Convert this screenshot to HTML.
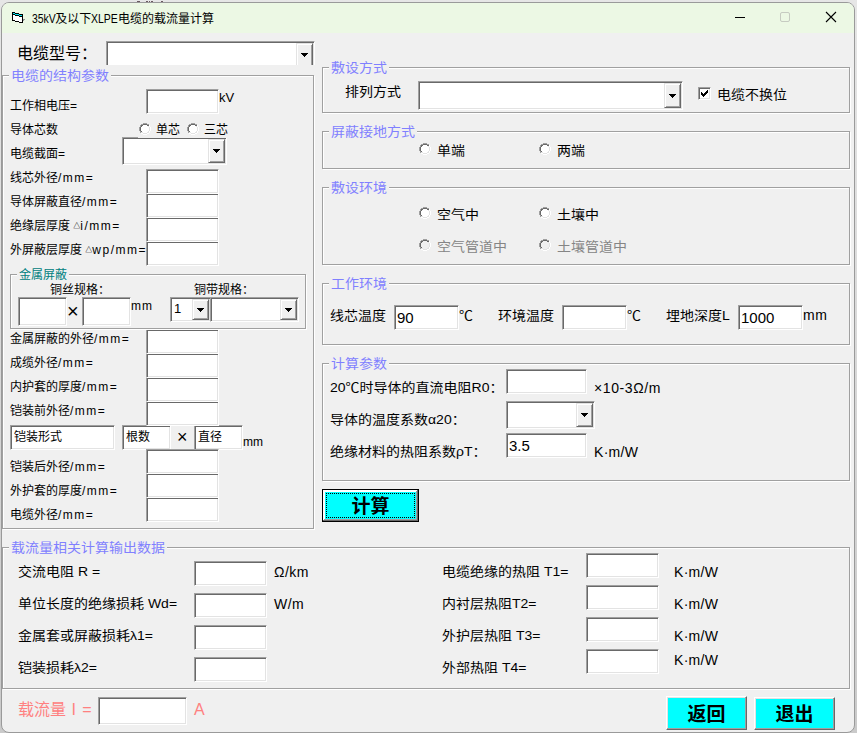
<!DOCTYPE html>
<html lang="zh-CN"><head><meta charset="utf-8"><title>35kV及以下XLPE电缆的载流量计算</title>
<style>
html,body{margin:0;padding:0;}
body{width:857px;height:733px;overflow:hidden;background:linear-gradient(#e6e6e6,#cacaca);position:relative;font-family:"Liberation Sans","Noto Sans CJK SC",sans-serif;}
#win{position:absolute;left:1px;top:2px;width:852px;height:729px;background:#f0f0f0;border:1px solid #9a9a9a;border-radius:8px;overflow:hidden;box-sizing:content-box;}
#c{position:absolute;left:-2px;top:-3px;width:857px;height:733px;}
#c>*{position:absolute;}
#tbar{left:0;top:0;width:857px;height:33px;background:#ecf8e4;}
.l{white-space:nowrap;}
.tb{background:#fff;box-sizing:border-box;border:1px solid;border-color:#a0a0a0 #fff #fff #a0a0a0;box-shadow:inset 1px 1px 0 #696969, inset -1px -1px 0 #e3e3e3;font-size:12px;}
.tb span{position:absolute;top:2px;white-space:nowrap;line-height:16px;}
.gb{box-sizing:border-box;border:1px solid #a0a0a0;box-shadow:1px 1px 0 #fff, inset 1px 1px 0 #fff;}
.gt{z-index:11;background:#f0f0f0;padding:0 2px;line-height:16px;white-space:nowrap;}
.cbtn{position:absolute;right:1px;top:1px;bottom:1px;background:#f0f0f0;box-sizing:border-box;border:1px solid;border-color:#e3e3e3 #696969 #696969 #e3e3e3;box-shadow:inset 1px 1px 0 #fff, inset -1px -1px 0 #a0a0a0;}
.rd{display:block;}
.ck{width:13px;height:13px;box-sizing:border-box;background:#fff;border:1px solid;border-color:#a0a0a0 #fff #fff #a0a0a0;box-shadow:inset 1px 1px 0 #696969, inset -1px -1px 0 #e3e3e3;}
.ck svg{position:absolute;left:-1px;top:-1px;}
.btn{background:#00ffff;box-sizing:border-box;text-align:center;font-weight:bold;border:1px solid;border-color:#fff #696969 #696969 #fff;box-shadow:inset -1px -1px 0 #a0a0a0, inset 1px 1px 0 #e3e3e3;display:flex;align-items:center;justify-content:center;}
.btn span{position:relative;line-height:1;white-space:nowrap;}
.btn.foc{border-color:#000;box-shadow:inset -1px -1px 0 #696969, inset 1px 1px 0 #fff, inset -2px -2px 0 #a0a0a0, inset 2px 2px 0 #fff;}
.fr{position:absolute;left:3px;top:3px;right:3px;bottom:3px;border:1px dotted #000;}
.tri{font-size:7px;position:relative;top:-2px;font-weight:bold;}
.tl{display:inline-block;transform:scaleX(.87);transform-origin:0 50%;margin-right:-4px;}
.rm{position:absolute;top:1px;height:1px;background:#6a5a60;}

</style></head><body>
<div class="rm" style="left:137px;width:3px"></div><div class="rm" style="left:146px;width:2px"></div><div class="rm" style="left:149px;width:1px"></div><div class="rm" style="left:151px;width:2px"></div><div class="rm" style="left:161px;width:2px"></div>
<div id="win"><div id="c">
<div id="tbar"></div>
<svg style="left:12px;top:12px" width="14" height="11" viewBox="0 0 14 11" shape-rendering="crispEdges">
<path d="M0 0h3v1h4v1h4v9h-4v-1h-4v-1h-3z" fill="#000"/>
<path d="M1 3h2v1h4v1h3v5h-3v-1h-4v-1h-2z" fill="#fff"/>
<path d="M1 1h2v1h4v1h3v1h-3v-1h-4v-1h-2z" fill="#00e8f0"/>
<path d="M11 7h2v1h-1v1h-1z" fill="#909090"/></svg>
<div class="l " style="left:32px;top:11px;font-size:12px;line-height:16px;"><span class="tl">35kV</span>及以下<span class="tl">XLPE</span>电缆的载流量计算</div>
<div style="left:735px;top:17px;width:10px;height:1px;background:#000"></div>
<div style="left:780px;top:12px;width:8px;height:8px;border:1px solid #c6cbc1;border-radius:2px"></div>
<svg style="left:825px;top:11px" width="12" height="12" viewBox="0 0 12 12"><path d="M1 1 L11 11 M11 1 L1 11" stroke="#000" stroke-width="1.1" fill="none"/></svg>
<div class="l " style="left:17px;top:44px;font-size:16px;line-height:20px;">电缆型号：</div>
<div style="left:106px;top:41px;width:209px;height:24px;overflow:hidden"><div class="tb" style="position:absolute;left:0;top:0;width:209px;height:28px"><div class="cbtn" style="width:17px"><svg width="7" height="4" viewBox="0 0 7 4" shape-rendering="crispEdges" style="position:absolute;left:4px;top:9px"><path d="M0 0h7v1h-1v1h-1v1h-1v1h-1v-1h-1v-1h-1v-1h-1z" fill="#000"/></svg></div></div></div>
<div class="gb" style="left:2px;top:75px;width:312px;height:454px;z-index:10;pointer-events:none"></div>
<div class="gt" style="left:9px;top:68px;font-size:14px;transform:scaleY(.9);transform-origin:0 20%;color:#8080ff;">电缆的结构参数</div>
<div class="l " style="left:10px;top:98px;font-size:12px;line-height:16px;">工作相电压<span style="letter-spacing:1.5px">=</span></div>
<div class="l " style="left:10px;top:122px;font-size:12px;line-height:16px;">导体芯数</div>
<div class="l " style="left:10px;top:146px;font-size:12px;line-height:16px;">电缆截面<span style="letter-spacing:1.5px">=</span></div>
<div class="l " style="left:10px;top:170px;font-size:12px;line-height:16px;">线芯外径<span style="letter-spacing:1.5px">/mm=</span></div>
<div class="l " style="left:10px;top:194px;font-size:12px;line-height:16px;">导体屏蔽直径<span style="letter-spacing:1.5px">/mm=</span></div>
<div class="l " style="left:10px;top:218px;font-size:12px;line-height:16px;">绝缘层厚度 <span class="tri">△</span><span style="letter-spacing:1.5px">i/mm=</span></div>
<div class="l " style="left:10px;top:242px;font-size:12px;line-height:16px;">外屏蔽层厚度 <span class="tri">△</span><span style="letter-spacing:1.5px">wp/mm=</span></div>
<div class="tb" style="left:146px;top:89px;width:73px;height:25px;font-size:12px;"></div>
<div class="l " style="left:219px;top:89px;font-size:13px;line-height:17px;">kV</div>
<svg class="rd" style="left:139px;top:123px" width="12" height="12" viewBox="0 0 12 12" shape-rendering="crispEdges"><path d="M4 0h4v1h-4zM2 1h2v1h-2zM8 1h2v1h-2zM1 2h1v1h-1zM1 3h1v1h-1zM0 4h1v1h-1zM0 5h1v1h-1zM0 6h1v1h-1zM0 7h1v1h-1zM1 8h1v1h-1zM1 9h1v1h-1z" fill="#a0a0a0"/><path d="M10 2h1v1h-1zM10 3h1v1h-1zM11 4h1v1h-1zM11 5h1v1h-1zM11 6h1v1h-1zM11 7h1v1h-1zM10 8h1v1h-1zM10 9h1v1h-1zM2 10h2v1h-2zM8 10h2v1h-2zM4 11h4v1h-4zM4 2h4v1h-4zM3 3h6v1h-6zM2 4h8v1h-8zM2 5h8v1h-8zM2 6h8v1h-8zM2 7h8v1h-8zM3 8h6v1h-6zM4 9h4v1h-4z" fill="#fff"/><path d="M4 1h4v1h-4zM2 2h2v1h-2zM8 2h2v1h-2zM2 3h1v1h-1zM1 4h1v1h-1zM1 5h1v1h-1zM1 6h1v1h-1zM1 7h1v1h-1zM2 8h1v1h-1z" fill="#696969"/><path d="M9 3h1v1h-1zM10 4h1v1h-1zM10 5h1v1h-1zM10 6h1v1h-1zM10 7h1v1h-1zM9 8h1v1h-1zM2 9h2v1h-2zM8 9h2v1h-2zM4 10h4v1h-4z" fill="#e3e3e3"/></svg>
<div class="l " style="left:156px;top:122px;font-size:12px;line-height:16px;">单芯</div>
<svg class="rd" style="left:187px;top:123px" width="12" height="12" viewBox="0 0 12 12" shape-rendering="crispEdges"><path d="M4 0h4v1h-4zM2 1h2v1h-2zM8 1h2v1h-2zM1 2h1v1h-1zM1 3h1v1h-1zM0 4h1v1h-1zM0 5h1v1h-1zM0 6h1v1h-1zM0 7h1v1h-1zM1 8h1v1h-1zM1 9h1v1h-1z" fill="#a0a0a0"/><path d="M10 2h1v1h-1zM10 3h1v1h-1zM11 4h1v1h-1zM11 5h1v1h-1zM11 6h1v1h-1zM11 7h1v1h-1zM10 8h1v1h-1zM10 9h1v1h-1zM2 10h2v1h-2zM8 10h2v1h-2zM4 11h4v1h-4zM4 2h4v1h-4zM3 3h6v1h-6zM2 4h8v1h-8zM2 5h8v1h-8zM2 6h8v1h-8zM2 7h8v1h-8zM3 8h6v1h-6zM4 9h4v1h-4z" fill="#fff"/><path d="M4 1h4v1h-4zM2 2h2v1h-2zM8 2h2v1h-2zM2 3h1v1h-1zM1 4h1v1h-1zM1 5h1v1h-1zM1 6h1v1h-1zM1 7h1v1h-1zM2 8h1v1h-1z" fill="#696969"/><path d="M9 3h1v1h-1zM10 4h1v1h-1zM10 5h1v1h-1zM10 6h1v1h-1zM10 7h1v1h-1zM9 8h1v1h-1zM2 9h2v1h-2zM8 9h2v1h-2zM4 10h4v1h-4z" fill="#e3e3e3"/></svg>
<div class="l " style="left:204px;top:122px;font-size:12px;line-height:16px;">三芯</div>
<div class="tb" style="left:122px;top:137px;width:105px;height:28px;font-size:12px"><div class="cbtn" style="width:17px"><svg width="7" height="4" viewBox="0 0 7 4" shape-rendering="crispEdges" style="position:absolute;left:4px;top:9px"><path d="M0 0h7v1h-1v1h-1v1h-1v1h-1v-1h-1v-1h-1v-1h-1z" fill="#000"/></svg></div></div>
<div style="left:138px;top:137px;width:89px;height:1px;background:#f0f0f0"></div>
<div class="tb" style="left:146px;top:169px;width:73px;height:25px;font-size:12px;z-index:9;"></div>
<div class="tb" style="left:146px;top:193px;width:73px;height:25px;font-size:12px;z-index:8;"></div>
<div class="tb" style="left:146px;top:217px;width:73px;height:25px;font-size:12px;z-index:7;"></div>
<div class="tb" style="left:146px;top:241px;width:73px;height:25px;font-size:12px;z-index:6;"></div>
<div class="gb" style="left:10px;top:274px;width:296px;height:55px;z-index:10;pointer-events:none"></div>
<div class="gt" style="left:17px;top:267px;font-size:12px;color:#008080;">金属屏蔽</div>
<div class="l " style="left:50px;top:282px;font-size:12px;line-height:16px;">铜丝规格：</div>
<div class="l " style="left:194px;top:282px;font-size:12px;line-height:16px;">铜带规格：</div>
<div class="tb" style="left:18px;top:297px;width:49px;height:29px;font-size:12px;"></div>
<div class="l " style="left:67px;top:299px;font-size:20px;line-height:24px;">×</div>
<div class="tb" style="left:82px;top:297px;width:49px;height:29px;font-size:12px;"></div>
<div class="l " style="left:131px;top:298px;font-size:12px;line-height:16px;"><span style="letter-spacing:1px">mm</span></div>
<div class="tb" style="left:170px;top:297px;width:41px;height:25px;font-size:13px"><span style="left:3px;top:3px">1</span><div class="cbtn" style="width:17px"><svg width="7" height="4" viewBox="0 0 7 4" shape-rendering="crispEdges" style="position:absolute;left:4px;top:8px"><path d="M0 0h7v1h-1v1h-1v1h-1v1h-1v-1h-1v-1h-1v-1h-1z" fill="#000"/></svg></div></div>
<div class="tb" style="left:210px;top:297px;width:89px;height:25px;font-size:12px"><div class="cbtn" style="width:17px"><svg width="7" height="4" viewBox="0 0 7 4" shape-rendering="crispEdges" style="position:absolute;left:4px;top:8px"><path d="M0 0h7v1h-1v1h-1v1h-1v1h-1v-1h-1v-1h-1v-1h-1z" fill="#000"/></svg></div></div>
<div class="l " style="left:10px;top:331px;font-size:12px;line-height:16px;">金属屏蔽的外径<span style="letter-spacing:1.5px">/mm=</span></div>
<div class="l " style="left:10px;top:355px;font-size:12px;line-height:16px;">成缆外径<span style="letter-spacing:1.5px">/mm=</span></div>
<div class="l " style="left:10px;top:379px;font-size:12px;line-height:16px;">内护套的厚度<span style="letter-spacing:1.5px">/mm=</span></div>
<div class="l " style="left:10px;top:403px;font-size:12px;line-height:16px;">铠装前外径<span style="letter-spacing:1.5px">/mm=</span></div>
<div class="l " style="left:10px;top:459px;font-size:12px;line-height:16px;">铠装后外径<span style="letter-spacing:1.5px">/mm=</span></div>
<div class="l " style="left:10px;top:483px;font-size:12px;line-height:16px;">外护套的厚度<span style="letter-spacing:1.5px">/mm=</span></div>
<div class="l " style="left:10px;top:507px;font-size:12px;line-height:16px;">电缆外径<span style="letter-spacing:1.5px">/mm=</span></div>
<div class="tb" style="left:146px;top:329px;width:73px;height:25px;font-size:12px;z-index:9;"></div>
<div class="tb" style="left:146px;top:353px;width:73px;height:25px;font-size:12px;z-index:8;"></div>
<div class="tb" style="left:146px;top:377px;width:73px;height:25px;font-size:12px;z-index:7;"></div>
<div class="tb" style="left:146px;top:401px;width:73px;height:25px;font-size:12px;z-index:6;"></div>
<div class="tb" style="left:146px;top:449px;width:73px;height:25px;font-size:12px;z-index:9;"></div>
<div class="tb" style="left:146px;top:473px;width:73px;height:25px;font-size:12px;z-index:8;"></div>
<div class="tb" style="left:146px;top:497px;width:73px;height:25px;font-size:12px;z-index:7;"></div>
<div class="tb" style="left:10px;top:425px;width:105px;height:25px;font-size:12px;z-index:5;"><span style="left:3px;top:3px">铠装形式</span></div>
<div class="tb" style="left:122px;top:425px;width:49px;height:25px;font-size:12px;z-index:5;"><span style="left:3px;top:3px">根数</span></div>
<div style="left:171px;top:426px;width:23px;height:24px;background:#f0f0f0;z-index:5"></div>
<div class="l " style="left:177px;top:426px;font-size:18px;line-height:22px;z-index:6;">×</div>
<div class="tb" style="left:194px;top:425px;width:49px;height:25px;font-size:12px;z-index:5;"><span style="left:3px;top:3px">直径</span></div>
<div class="l " style="left:243px;top:434px;font-size:12px;line-height:16px;">mm</div>
<div class="gb" style="left:322px;top:67px;width:528px;height:46px;z-index:10;pointer-events:none"></div>
<div class="gt" style="left:329px;top:60px;font-size:14px;transform:scaleY(.9);transform-origin:0 20%;color:#8080ff;">敷设方式</div>
<div class="l " style="left:345px;top:83px;font-size:14px;line-height:18px;transform:scaleY(.9);transform-origin:0 20%;">排列方式</div>
<div class="tb" style="left:418px;top:81px;width:265px;height:29px;font-size:12px"><div class="cbtn" style="width:17px"><svg width="7" height="4" viewBox="0 0 7 4" shape-rendering="crispEdges" style="position:absolute;left:4px;top:10px"><path d="M0 0h7v1h-1v1h-1v1h-1v1h-1v-1h-1v-1h-1v-1h-1z" fill="#000"/></svg></div></div>
<div class="ck" style="left:698px;top:87px"><svg width="13" height="13" viewBox="0 0 13 13" shape-rendering="crispEdges"><path d="M3 5h1v3h-1zM4 6h1v3h-1zM5 7h1v3h-1zM6 6h1v3h-1zM7 5h1v3h-1zM8 4h1v3h-1zM9 3h1v3h-1z" fill="#000"/></svg></div>
<div class="l " style="left:717px;top:86px;font-size:14px;line-height:18px;transform:scaleY(.9);transform-origin:0 20%;">电缆不换位</div>
<div class="gb" style="left:322px;top:131px;width:528px;height:38px;z-index:10;pointer-events:none"></div>
<div class="gt" style="left:329px;top:124px;font-size:14px;transform:scaleY(.9);transform-origin:0 20%;color:#8080ff;">屏蔽接地方式</div>
<svg class="rd" style="left:419px;top:143px" width="12" height="12" viewBox="0 0 12 12" shape-rendering="crispEdges"><path d="M4 0h4v1h-4zM2 1h2v1h-2zM8 1h2v1h-2zM1 2h1v1h-1zM1 3h1v1h-1zM0 4h1v1h-1zM0 5h1v1h-1zM0 6h1v1h-1zM0 7h1v1h-1zM1 8h1v1h-1zM1 9h1v1h-1z" fill="#a0a0a0"/><path d="M10 2h1v1h-1zM10 3h1v1h-1zM11 4h1v1h-1zM11 5h1v1h-1zM11 6h1v1h-1zM11 7h1v1h-1zM10 8h1v1h-1zM10 9h1v1h-1zM2 10h2v1h-2zM8 10h2v1h-2zM4 11h4v1h-4zM4 2h4v1h-4zM3 3h6v1h-6zM2 4h8v1h-8zM2 5h8v1h-8zM2 6h8v1h-8zM2 7h8v1h-8zM3 8h6v1h-6zM4 9h4v1h-4z" fill="#fff"/><path d="M4 1h4v1h-4zM2 2h2v1h-2zM8 2h2v1h-2zM2 3h1v1h-1zM1 4h1v1h-1zM1 5h1v1h-1zM1 6h1v1h-1zM1 7h1v1h-1zM2 8h1v1h-1z" fill="#696969"/><path d="M9 3h1v1h-1zM10 4h1v1h-1zM10 5h1v1h-1zM10 6h1v1h-1zM10 7h1v1h-1zM9 8h1v1h-1zM2 9h2v1h-2zM8 9h2v1h-2zM4 10h4v1h-4z" fill="#e3e3e3"/></svg>
<div class="l " style="left:437px;top:142px;font-size:14px;line-height:18px;transform:scaleY(.9);transform-origin:0 20%;">单端</div>
<svg class="rd" style="left:539px;top:143px" width="12" height="12" viewBox="0 0 12 12" shape-rendering="crispEdges"><path d="M4 0h4v1h-4zM2 1h2v1h-2zM8 1h2v1h-2zM1 2h1v1h-1zM1 3h1v1h-1zM0 4h1v1h-1zM0 5h1v1h-1zM0 6h1v1h-1zM0 7h1v1h-1zM1 8h1v1h-1zM1 9h1v1h-1z" fill="#a0a0a0"/><path d="M10 2h1v1h-1zM10 3h1v1h-1zM11 4h1v1h-1zM11 5h1v1h-1zM11 6h1v1h-1zM11 7h1v1h-1zM10 8h1v1h-1zM10 9h1v1h-1zM2 10h2v1h-2zM8 10h2v1h-2zM4 11h4v1h-4zM4 2h4v1h-4zM3 3h6v1h-6zM2 4h8v1h-8zM2 5h8v1h-8zM2 6h8v1h-8zM2 7h8v1h-8zM3 8h6v1h-6zM4 9h4v1h-4z" fill="#fff"/><path d="M4 1h4v1h-4zM2 2h2v1h-2zM8 2h2v1h-2zM2 3h1v1h-1zM1 4h1v1h-1zM1 5h1v1h-1zM1 6h1v1h-1zM1 7h1v1h-1zM2 8h1v1h-1z" fill="#696969"/><path d="M9 3h1v1h-1zM10 4h1v1h-1zM10 5h1v1h-1zM10 6h1v1h-1zM10 7h1v1h-1zM9 8h1v1h-1zM2 9h2v1h-2zM8 9h2v1h-2zM4 10h4v1h-4z" fill="#e3e3e3"/></svg>
<div class="l " style="left:557px;top:142px;font-size:14px;line-height:18px;transform:scaleY(.9);transform-origin:0 20%;">两端</div>
<div class="gb" style="left:322px;top:187px;width:528px;height:78px;z-index:10;pointer-events:none"></div>
<div class="gt" style="left:329px;top:180px;font-size:14px;transform:scaleY(.9);transform-origin:0 20%;color:#8080ff;">敷设环境</div>
<svg class="rd" style="left:419px;top:207px" width="12" height="12" viewBox="0 0 12 12" shape-rendering="crispEdges"><path d="M4 0h4v1h-4zM2 1h2v1h-2zM8 1h2v1h-2zM1 2h1v1h-1zM1 3h1v1h-1zM0 4h1v1h-1zM0 5h1v1h-1zM0 6h1v1h-1zM0 7h1v1h-1zM1 8h1v1h-1zM1 9h1v1h-1z" fill="#a0a0a0"/><path d="M10 2h1v1h-1zM10 3h1v1h-1zM11 4h1v1h-1zM11 5h1v1h-1zM11 6h1v1h-1zM11 7h1v1h-1zM10 8h1v1h-1zM10 9h1v1h-1zM2 10h2v1h-2zM8 10h2v1h-2zM4 11h4v1h-4zM4 2h4v1h-4zM3 3h6v1h-6zM2 4h8v1h-8zM2 5h8v1h-8zM2 6h8v1h-8zM2 7h8v1h-8zM3 8h6v1h-6zM4 9h4v1h-4z" fill="#fff"/><path d="M4 1h4v1h-4zM2 2h2v1h-2zM8 2h2v1h-2zM2 3h1v1h-1zM1 4h1v1h-1zM1 5h1v1h-1zM1 6h1v1h-1zM1 7h1v1h-1zM2 8h1v1h-1z" fill="#696969"/><path d="M9 3h1v1h-1zM10 4h1v1h-1zM10 5h1v1h-1zM10 6h1v1h-1zM10 7h1v1h-1zM9 8h1v1h-1zM2 9h2v1h-2zM8 9h2v1h-2zM4 10h4v1h-4z" fill="#e3e3e3"/></svg>
<div class="l " style="left:437px;top:206px;font-size:14px;line-height:18px;transform:scaleY(.9);transform-origin:0 20%;">空气中</div>
<svg class="rd" style="left:539px;top:207px" width="12" height="12" viewBox="0 0 12 12" shape-rendering="crispEdges"><path d="M4 0h4v1h-4zM2 1h2v1h-2zM8 1h2v1h-2zM1 2h1v1h-1zM1 3h1v1h-1zM0 4h1v1h-1zM0 5h1v1h-1zM0 6h1v1h-1zM0 7h1v1h-1zM1 8h1v1h-1zM1 9h1v1h-1z" fill="#a0a0a0"/><path d="M10 2h1v1h-1zM10 3h1v1h-1zM11 4h1v1h-1zM11 5h1v1h-1zM11 6h1v1h-1zM11 7h1v1h-1zM10 8h1v1h-1zM10 9h1v1h-1zM2 10h2v1h-2zM8 10h2v1h-2zM4 11h4v1h-4zM4 2h4v1h-4zM3 3h6v1h-6zM2 4h8v1h-8zM2 5h8v1h-8zM2 6h8v1h-8zM2 7h8v1h-8zM3 8h6v1h-6zM4 9h4v1h-4z" fill="#fff"/><path d="M4 1h4v1h-4zM2 2h2v1h-2zM8 2h2v1h-2zM2 3h1v1h-1zM1 4h1v1h-1zM1 5h1v1h-1zM1 6h1v1h-1zM1 7h1v1h-1zM2 8h1v1h-1z" fill="#696969"/><path d="M9 3h1v1h-1zM10 4h1v1h-1zM10 5h1v1h-1zM10 6h1v1h-1zM10 7h1v1h-1zM9 8h1v1h-1zM2 9h2v1h-2zM8 9h2v1h-2zM4 10h4v1h-4z" fill="#e3e3e3"/></svg>
<div class="l " style="left:557px;top:206px;font-size:14px;line-height:18px;transform:scaleY(.9);transform-origin:0 20%;">土壤中</div>
<svg class="rd" style="left:419px;top:239px" width="12" height="12" viewBox="0 0 12 12" shape-rendering="crispEdges"><path d="M4 0h4v1h-4zM2 1h2v1h-2zM8 1h2v1h-2zM1 2h1v1h-1zM1 3h1v1h-1zM0 4h1v1h-1zM0 5h1v1h-1zM0 6h1v1h-1zM0 7h1v1h-1zM1 8h1v1h-1zM1 9h1v1h-1z" fill="#a0a0a0"/><path d="M10 2h1v1h-1zM10 3h1v1h-1zM11 4h1v1h-1zM11 5h1v1h-1zM11 6h1v1h-1zM11 7h1v1h-1zM10 8h1v1h-1zM10 9h1v1h-1zM2 10h2v1h-2zM8 10h2v1h-2zM4 11h4v1h-4z" fill="#fff"/><path d="M4 1h4v1h-4zM2 2h2v1h-2zM8 2h2v1h-2zM2 3h1v1h-1zM1 4h1v1h-1zM1 5h1v1h-1zM1 6h1v1h-1zM1 7h1v1h-1zM2 8h1v1h-1z" fill="#696969"/><path d="M9 3h1v1h-1zM10 4h1v1h-1zM10 5h1v1h-1zM10 6h1v1h-1zM10 7h1v1h-1zM9 8h1v1h-1zM2 9h2v1h-2zM8 9h2v1h-2zM4 10h4v1h-4z" fill="#e3e3e3"/><path d="M4 2h4v1h-4zM3 3h6v1h-6zM2 4h8v1h-8zM2 5h8v1h-8zM2 6h8v1h-8zM2 7h8v1h-8zM3 8h6v1h-6zM4 9h4v1h-4z" fill="#f0f0f0"/></svg>
<div class="l " style="left:437px;top:238px;font-size:14px;line-height:18px;color:#858585;transform:scaleY(.9);transform-origin:0 20%;">空气管道中</div>
<svg class="rd" style="left:539px;top:239px" width="12" height="12" viewBox="0 0 12 12" shape-rendering="crispEdges"><path d="M4 0h4v1h-4zM2 1h2v1h-2zM8 1h2v1h-2zM1 2h1v1h-1zM1 3h1v1h-1zM0 4h1v1h-1zM0 5h1v1h-1zM0 6h1v1h-1zM0 7h1v1h-1zM1 8h1v1h-1zM1 9h1v1h-1z" fill="#a0a0a0"/><path d="M10 2h1v1h-1zM10 3h1v1h-1zM11 4h1v1h-1zM11 5h1v1h-1zM11 6h1v1h-1zM11 7h1v1h-1zM10 8h1v1h-1zM10 9h1v1h-1zM2 10h2v1h-2zM8 10h2v1h-2zM4 11h4v1h-4z" fill="#fff"/><path d="M4 1h4v1h-4zM2 2h2v1h-2zM8 2h2v1h-2zM2 3h1v1h-1zM1 4h1v1h-1zM1 5h1v1h-1zM1 6h1v1h-1zM1 7h1v1h-1zM2 8h1v1h-1z" fill="#696969"/><path d="M9 3h1v1h-1zM10 4h1v1h-1zM10 5h1v1h-1zM10 6h1v1h-1zM10 7h1v1h-1zM9 8h1v1h-1zM2 9h2v1h-2zM8 9h2v1h-2zM4 10h4v1h-4z" fill="#e3e3e3"/><path d="M4 2h4v1h-4zM3 3h6v1h-6zM2 4h8v1h-8zM2 5h8v1h-8zM2 6h8v1h-8zM2 7h8v1h-8zM3 8h6v1h-6zM4 9h4v1h-4z" fill="#f0f0f0"/></svg>
<div class="l " style="left:557px;top:238px;font-size:14px;line-height:18px;color:#858585;transform:scaleY(.9);transform-origin:0 20%;">土壤管道中</div>
<div class="gb" style="left:322px;top:283px;width:528px;height:62px;z-index:10;pointer-events:none"></div>
<div class="gt" style="left:329px;top:276px;font-size:14px;transform:scaleY(.9);transform-origin:0 20%;color:#8080ff;">工作环境</div>
<div class="l " style="left:330px;top:307px;font-size:14px;line-height:18px;transform:scaleY(.9);transform-origin:0 20%;">线芯温度</div>
<div class="tb" style="left:394px;top:305px;width:65px;height:25px;font-size:15px;"><span style="left:2px;top:4px">90</span></div>
<div class="l " style="left:459px;top:307px;font-size:14px;line-height:18px;transform:scaleY(.9);transform-origin:0 20%;">℃</div>
<div class="l " style="left:498px;top:307px;font-size:14px;line-height:18px;transform:scaleY(.9);transform-origin:0 20%;">环境温度</div>
<div class="tb" style="left:562px;top:305px;width:65px;height:25px;font-size:15px;"></div>
<div class="l " style="left:627px;top:307px;font-size:14px;line-height:18px;transform:scaleY(.9);transform-origin:0 20%;">℃</div>
<div class="l " style="left:666px;top:307px;font-size:14px;line-height:18px;transform:scaleY(.9);transform-origin:0 20%;">埋地深度L</div>
<div class="tb" style="left:738px;top:305px;width:65px;height:25px;font-size:15px;"><span style="left:2px;top:4px">1000</span></div>
<div class="l " style="left:803px;top:306px;font-size:14px;line-height:18px;letter-spacing:0.5px;">mm</div>
<div class="gb" style="left:322px;top:363px;width:528px;height:118px;z-index:10;pointer-events:none"></div>
<div class="gt" style="left:329px;top:356px;font-size:14px;transform:scaleY(.9);transform-origin:0 20%;color:#8080ff;">计算参数</div>
<div class="l " style="left:330px;top:379px;font-size:14px;line-height:18px;transform:scaleY(.9);transform-origin:0 20%;">20℃时导体的直流电阻R0：</div>
<div class="tb" style="left:506px;top:369px;width:81px;height:25px;font-size:12px;"></div>
<div class="l " style="left:594px;top:379px;font-size:14px;line-height:18px;letter-spacing:0.6px;">×10-3Ω/m</div>
<div class="l " style="left:330px;top:411px;font-size:14px;line-height:18px;transform:scaleY(.9);transform-origin:0 20%;">导体的温度系数α20：</div>
<div class="tb" style="left:506px;top:401px;width:89px;height:28px;font-size:12px"><div class="cbtn" style="width:17px"><svg width="7" height="4" viewBox="0 0 7 4" shape-rendering="crispEdges" style="position:absolute;left:4px;top:9px"><path d="M0 0h7v1h-1v1h-1v1h-1v1h-1v-1h-1v-1h-1v-1h-1z" fill="#000"/></svg></div></div>
<div class="l " style="left:330px;top:443px;font-size:14px;line-height:18px;transform:scaleY(.9);transform-origin:0 20%;">绝缘材料的热阻系数ρT：</div>
<div class="tb" style="left:506px;top:433px;width:81px;height:25px;font-size:15px;"><span style="left:2px;top:4px">3.5</span></div>
<div class="l " style="left:594px;top:443px;font-size:14px;line-height:18px;letter-spacing:0.3px;">K·m/W</div>
<div class="btn foc" style="left:322px;top:489px;width:97px;height:33px;font-size:19px;"><div class="fr"></div><span style="top:1px">计算</span></div>
<div class="gb" style="left:2px;top:547px;width:848px;height:142px;z-index:10;pointer-events:none"></div>
<div class="gt" style="left:9px;top:540px;font-size:14px;transform:scaleY(.9);transform-origin:0 20%;color:#8080ff;">载流量相关计算输出数据</div>
<div class="l " style="left:18px;top:563px;font-size:14px;line-height:18px;transform:scaleY(.9);transform-origin:0 20%;">交流电阻 R =</div>
<div class="l " style="left:18px;top:595px;font-size:14px;line-height:18px;transform:scaleY(.9);transform-origin:0 20%;">单位长度的绝缘损耗 Wd=</div>
<div class="l " style="left:18px;top:627px;font-size:14px;line-height:18px;transform:scaleY(.9);transform-origin:0 20%;">金属套或屏蔽损耗λ1=</div>
<div class="l " style="left:18px;top:659px;font-size:14px;line-height:18px;transform:scaleY(.9);transform-origin:0 20%;">铠装损耗λ2=</div>
<div class="tb" style="left:194px;top:561px;width:73px;height:25px;font-size:12px;"></div>
<div class="tb" style="left:194px;top:593px;width:73px;height:25px;font-size:12px;"></div>
<div class="tb" style="left:194px;top:625px;width:73px;height:25px;font-size:12px;"></div>
<div class="tb" style="left:194px;top:657px;width:73px;height:25px;font-size:12px;"></div>
<div class="l " style="left:274px;top:563px;font-size:14px;line-height:18px;letter-spacing:0.5px;">Ω/km</div>
<div class="l " style="left:274px;top:595px;font-size:14px;line-height:18px;letter-spacing:0.5px;">W/m</div>
<div class="l " style="left:442px;top:563px;font-size:14px;line-height:18px;transform:scaleY(.9);transform-origin:0 20%;">电缆绝缘的热阻 T1=</div>
<div class="l " style="left:442px;top:595px;font-size:14px;line-height:18px;transform:scaleY(.9);transform-origin:0 20%;">内衬层热阻T2=</div>
<div class="l " style="left:442px;top:627px;font-size:14px;line-height:18px;transform:scaleY(.9);transform-origin:0 20%;">外护层热阻 T3=</div>
<div class="l " style="left:442px;top:659px;font-size:14px;line-height:18px;transform:scaleY(.9);transform-origin:0 20%;">外部热阻 T4=</div>
<div class="tb" style="left:586px;top:553px;width:73px;height:25px;font-size:12px;"></div>
<div class="tb" style="left:586px;top:585px;width:73px;height:25px;font-size:12px;"></div>
<div class="tb" style="left:586px;top:617px;width:73px;height:25px;font-size:12px;"></div>
<div class="tb" style="left:586px;top:649px;width:73px;height:25px;font-size:12px;"></div>
<div class="l " style="left:674px;top:563px;font-size:14px;line-height:18px;letter-spacing:0.3px;">K·m/W</div>
<div class="l " style="left:674px;top:595px;font-size:14px;line-height:18px;letter-spacing:0.3px;">K·m/W</div>
<div class="l " style="left:674px;top:627px;font-size:14px;line-height:18px;letter-spacing:0.3px;">K·m/W</div>
<div class="l " style="left:674px;top:651px;font-size:14px;line-height:18px;letter-spacing:0.3px;">K·m/W</div>
<div class="l " style="left:18px;top:700px;font-size:16px;line-height:20px;color:#ff8080;">载流量<span style="letter-spacing:1px"> I =</span></div>
<div class="tb" style="left:98px;top:697px;width:89px;height:28px;font-size:12px;"></div>
<div class="l " style="left:194px;top:700px;font-size:16px;line-height:20px;color:#ff8080;">A</div>
<div class="btn" style="left:666px;top:696px;width:81px;height:34px;font-size:19px;"><span style="top:1px">返回</span></div>
<div class="btn" style="left:754px;top:697px;width:81px;height:33px;font-size:19px;"><span style="top:1px">退出</span></div>
</div></div>
</body></html>
